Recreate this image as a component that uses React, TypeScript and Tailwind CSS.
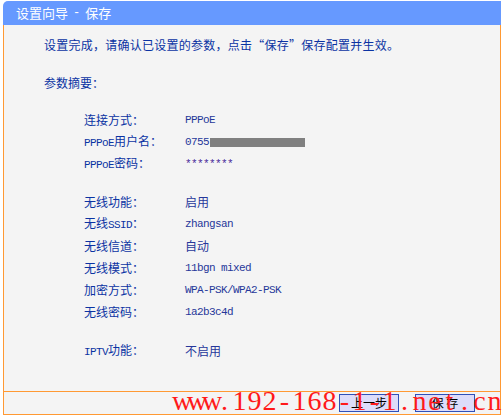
import React from "react";

const CJK = "font-['Noto_Sans_CJK_SC',sans-serif]";
const MONO = "font-['Liberation_Mono',monospace] text-[11px] tracking-[-0.6px]";

function M({ children }: { children: React.ReactNode }) {
  return <span className={MONO}>{children}</span>;
}

type Row = { label: React.ReactNode; value: React.ReactNode };

function Rows({ rows, className = "" }: { rows: Row[]; className?: string }) {
  return (
    <div className={"flex flex-col " + className}>
      {rows.map((r, i) => (
        <div key={i} className="flex items-center h-[22px]">
          <div className="w-[101px] text-[12px] text-[#0b33a3] whitespace-nowrap">{r.label}</div>
          <div className="text-[12px] text-[#26379a] whitespace-nowrap flex items-center">{r.value}</div>
        </div>
      ))}
    </div>
  );
}

const WATERMARK = "www.192-168-1-1.net.cn";

export default function App() {
  return (
    <div className={"relative w-[504px] h-[417px] bg-white overflow-hidden " + CJK}>
      <div className="ml-[3px] pt-[1px] w-[498px]">
        <div className="h-[24px] bg-[#6699ff] rounded-tl-[5px] pl-[13px] flex items-center text-white text-[13px]">
          设置向导<span className="font-['Liberation_Mono',monospace] text-[12px] mx-[5px]">-</span>保存
        </div>
        <div className="h-[366px] border-x border-[#ff9933] bg-[#f4f4f4] pl-[40px] pt-[10px]">
          <div className="h-[20px] flex items-center text-[12px] text-[#0b33a3] tracking-[0.25px]">
            设置完成，请确认已设置的参数，点击“保存”保存配置并生效。
          </div>
          <div className="mt-[18px] h-[20px] flex items-center text-[12px] text-[#0b33a3]">参数摘要：</div>
          <div className="pl-[40px]">
            <Rows
              className="mt-[16px]"
              rows={[
                { label: "连接方式：", value: <M>PPPoE</M> },
                {
                  label: (
                    <>
                      <M>PPPoE</M>用户名：
                    </>
                  ),
                  value: (
                    <>
                      <M>0755</M>
                      <span className="inline-block w-[95px] h-[9px] bg-[#808080] ml-[1px]" />
                    </>
                  ),
                },
                {
                  label: (
                    <>
                      <M>PPPoE</M>密码：
                    </>
                  ),
                  value: <span className={MONO + " text-[#4a2a9a]"}>********</span>,
                },
              ]}
            />
            <Rows
              className="mt-[16px]"
              rows={[
                { label: "无线功能：", value: "启用" },
                {
                  label: (
                    <>
                      无线<M>SSID</M>：
                    </>
                  ),
                  value: <M>zhangsan</M>,
                },
                { label: "无线信道：", value: "自动" },
                { label: "无线模式：", value: <M>11bgn mixed</M> },
                { label: "加密方式：", value: <M>WPA-PSK/WPA2-PSK</M> },
                { label: "无线密码：", value: <M>1a2b3c4d</M> },
              ]}
            />
            <Rows
              className="mt-[17px]"
              rows={[
                {
                  label: (
                    <>
                      <M>IPTV</M>功能：
                    </>
                  ),
                  value: "不启用",
                },
              ]}
            />
          </div>
        </div>
        <div className="h-[24px] border border-[#ff9933] bg-[#f4f4f4] flex items-center justify-end pr-[25px] gap-[16px]">
          <button className="w-[60px] h-[18px] border border-[#3050b8] bg-[#dcdcfa] text-black text-[12px] leading-none flex items-center justify-center">
            上一步
          </button>
          <button className="w-[60px] h-[18px] border border-[#3050b8] bg-[#dcdcfa] text-black text-[12px] leading-none flex items-center justify-center">
            保&nbsp;存
          </button>
        </div>
      </div>
      <div className="absolute left-[172px] top-[387px] flex pointer-events-none font-['Liberation_Serif',serif] text-[28px] leading-none text-[#ff1a1a] h-[28px]">
        {WATERMARK.split("").map((c, i) => (
          <span key={i} className="inline-block w-[15px] text-center">
            {c}
          </span>
        ))}
      </div>
    </div>
  );
}
